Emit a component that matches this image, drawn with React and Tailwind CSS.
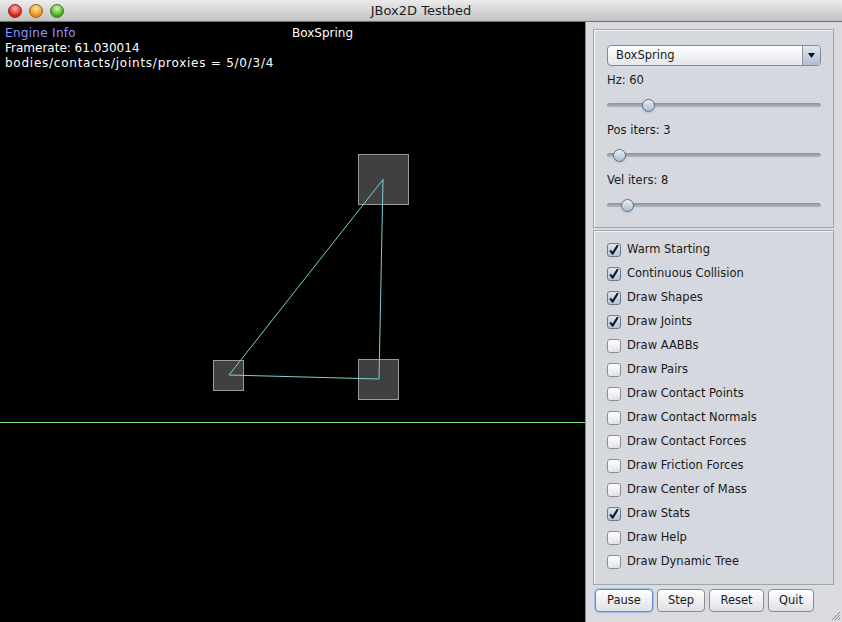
import React from 'react';

const CHECKS = [
  { label: 'Warm Starting', on: true },
  { label: 'Continuous Collision', on: true },
  { label: 'Draw Shapes', on: true },
  { label: 'Draw Joints', on: true },
  { label: 'Draw AABBs', on: false },
  { label: 'Draw Pairs', on: false },
  { label: 'Draw Contact Points', on: false },
  { label: 'Draw Contact Normals', on: false },
  { label: 'Draw Contact Forces', on: false },
  { label: 'Draw Friction Forces', on: false },
  { label: 'Draw Center of Mass', on: false },
  { label: 'Draw Stats', on: true },
  { label: 'Draw Help', on: false },
  { label: 'Draw Dynamic Tree', on: false },
];

const SLIDERS = [
  { label: 'Hz: 60', pos: 41 },
  { label: 'Pos iters: 3', pos: 12 },
  { label: 'Vel iters: 8', pos: 20 },
];

const BUTTONS = [
  { label: 'Pause', w: 'w-[58px]', focus: true },
  { label: 'Step', w: 'w-[48px]' },
  { label: 'Reset', w: 'w-[55px]' },
  { label: 'Quit', w: 'w-[46px]' },
];

function Light({ from, to, border }) {
  return (
    <div
      className="w-[14px] h-[14px] rounded-full border"
      style={{ background: `radial-gradient(circle at 50% 30%, ${from}, ${to} 70%)`, borderColor: border }}
    />
  );
}

function Slider({ pos }) {
  return (
    <div className="relative h-[25px] flex items-center pr-[10px]">
      <div className="h-[5px] w-full rounded-full bg-gradient-to-b from-[#8e9096] to-[#b8bac0] border-b border-[#d0d2d6]" />
      <div
        className="absolute w-[13px] h-[13px] rounded-full border border-[#5f6f82] bg-gradient-to-b from-[#e9eff5] to-[#a9bdd0] shadow-sm"
        style={{ left: pos - 6.5 }}
      />
    </div>
  );
}

function Checkbox({ on }) {
  return (
    <div
      className={`w-[14px] h-[14px] rounded-[3px] border flex items-center justify-center ${on ? 'border-[#6c7a8a] bg-gradient-to-b from-[#dbe6f1] to-[#b0c4d8]' : 'border-[#8d8f94] bg-gradient-to-b from-[#ffffff] to-[#e2e3e6]'}`}
    >
      {on && (
        <svg width="12" height="12" viewBox="0 0 12 12">
          <path d="M2.2 6.4 L4.6 9.6 L9.8 1.2" fill="none" stroke="#111" strokeWidth="2" strokeLinejoin="round" />
        </svg>
      )}
    </div>
  );
}

export default function App() {
  return (
    <div className="w-[842px] h-[622px] flex flex-col overflow-hidden bg-[#d9dbe0]" style={{ fontFamily: '"DejaVu Sans", sans-serif' }}>
      {/* Title bar */}
      <div className="relative h-[22px] flex items-center justify-center bg-gradient-to-b from-[#ececec] to-[#c2c2c2] border-b border-[#6f6f6f]">
        <div className="absolute left-[8px] top-[4px] flex gap-[7px]">
          <Light from="#ffb4ac" to="#d8190f" border="#8c2a22" />
          <Light from="#ffe9a4" to="#e88a08" border="#97621a" />
          <Light from="#d8f8b6" to="#40aa16" border="#3c7a22" />
        </div>
        <span className="text-[13px] text-[#1e1e1e]">JBox2D Testbed</span>
      </div>

      <div className="flex flex-1 min-h-0">
        {/* Simulation canvas */}
        <div className="relative w-[585px] h-full bg-black">
          <svg className="absolute inset-0" width="585" height="600" viewBox="0 0 585 600">
            <line x1="0" y1="400.5" x2="585" y2="400.5" stroke="#80e680" strokeWidth="1" />
            <rect x="358.5" y="132.5" width="50" height="50" fill="#404040" stroke="#9a9a9a" />
            <rect x="213.5" y="338.5" width="30" height="30" fill="#404040" stroke="#9a9a9a" />
            <rect x="358.5" y="337.5" width="40" height="40" fill="#404040" stroke="#9a9a9a" />
            <g stroke="#7fcfcf" strokeWidth="1" fill="none">
              <line x1="229" y1="353" x2="383" y2="157.5" />
              <line x1="383" y1="157.5" x2="379" y2="357" />
              <line x1="229" y1="353" x2="379" y2="357" />
            </g>
          </svg>
          <div className="absolute left-[5px] top-[4px] text-[12px] leading-[15px] text-white">
            <div className="text-[#9393ff] tracking-[0.3px]">Engine Info</div>
            <div>Framerate: 61.030014</div>
            <div className="tracking-[0.75px]">bodies/contacts/joints/proxies = 5/0/3/4</div>
          </div>
          <div className="absolute left-[292px] top-[4px] text-[12px] leading-[15px] text-white">BoxSpring</div>
        </div>

        {/* Control panel */}
        <div className="relative flex-1 flex flex-col border-l border-[#8a8a8a] pl-[7px] pr-[8px] pt-[7px] text-[11.5px] text-[#1a1a1a]">
          <div className="h-[199px] border border-[#a3a5aa] shadow-[inset_1px_1px_0_#f4f5f7] bg-[#d5d8de] pl-[13px] pr-[2px] pt-[15px]">
            <div className="h-[21px] mr-[10px] flex rounded-[4px] border border-[#858890] bg-gradient-to-b from-[#ffffff] to-[#e4e6ea] overflow-hidden">
              <span className="flex-1 pl-[8px] leading-[19px]">BoxSpring</span>
              <div className="w-[18px] border-l border-[#8d949e] bg-gradient-to-b from-[#dfe7ef] to-[#adbfd1] flex items-center justify-center">
                <svg width="7" height="5" viewBox="0 0 7 5"><path d="M0 0 H7 L3.5 5 Z" fill="#111" /></svg>
              </div>
            </div>
            <div className="mt-[2px]">
              {SLIDERS.map(s => (
                <div key={s.label}>
                  <div className="h-[25px] flex items-center">{s.label}</div>
                  <Slider pos={s.pos} />
                </div>
              ))}
            </div>
          </div>

          <div className="mt-[2px] h-[355px] border border-[#a3a5aa] shadow-[inset_1px_1px_0_#f4f5f7] bg-[#d5d8de] pl-[13px] pt-[7px]">
            {CHECKS.map(c => (
              <div key={c.label} className="h-[24px] flex items-center gap-[6px]">
                <Checkbox on={c.on} />
                <span>{c.label}</span>
              </div>
            ))}
          </div>

          <div className="mt-[4px] pl-[2px] flex gap-[4px]">
            {BUTTONS.map(b => (
              <div
                key={b.label}
                className={`${b.w} h-[23px] rounded-[4px] border flex items-center justify-center bg-gradient-to-b from-[#ffffff] to-[#dfe1e5] ${b.focus ? 'border-[#5b8fcf] shadow-[0_0_0_1px_#9dbfe6]' : 'border-[#8a8c92]'}`}
              >
                {b.label}
              </div>
            ))}
          </div>

          <svg className="absolute right-[1px] bottom-[1px]" width="11" height="11" viewBox="0 0 11 11">
            <g stroke="#8a8a8a" strokeWidth="1">
              <line x1="10" y1="2" x2="2" y2="10" />
              <line x1="10" y1="5" x2="5" y2="10" />
              <line x1="10" y1="8" x2="8" y2="10" />
            </g>
          </svg>
        </div>
      </div>
    </div>
  );
}
